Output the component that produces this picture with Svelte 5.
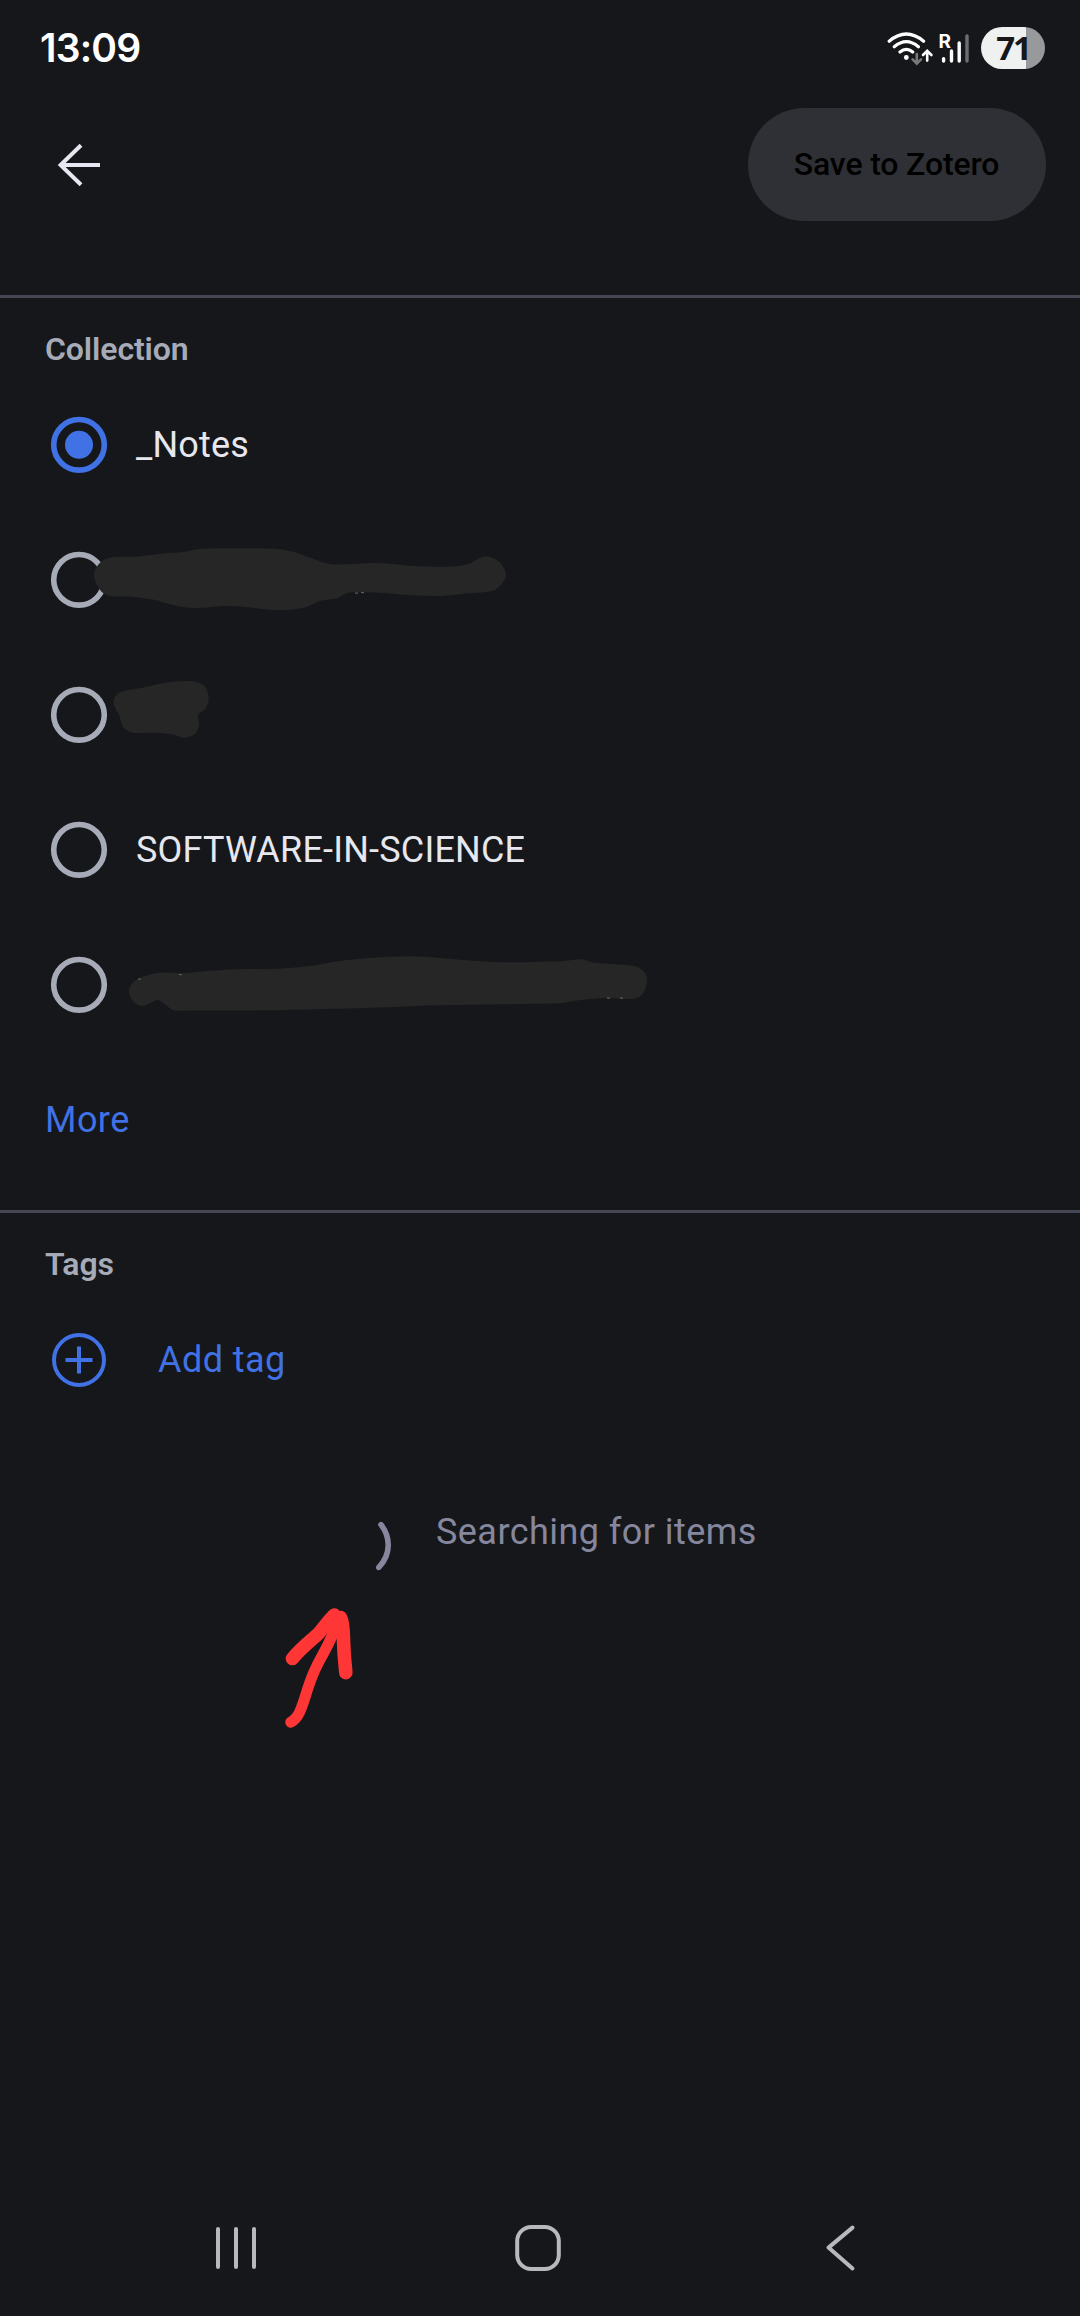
<script lang="ts">
  type Point = [number, number];

  type Collection = {
    id: number;
    name?: string;
    mask?: Point[];
    specks?: Point[];
  };

  const collections: Collection[] = [
    { id: 1, name: '_Notes' },
    {
      id: 2,
      mask: [
        [94, 63], [100, 50.7], [112, 45.3], [138, 44.5], [165, 41.3], [182, 40.3],
        [200, 37], [238, 36.3], [275, 36.8], [293, 39.7], [310, 45.7], [332, 52.3],
        [379, 51], [413, 54], [448, 54.7], [468, 52.3], [485, 44.3], [499, 49.7],
        [506, 63], [499, 75], [489, 79.7], [468, 81.3], [441, 84], [413, 83.3],
        [379, 80.7], [348, 80.7], [337, 86.3], [320, 89], [303, 96], [275, 98],
        [231, 94], [193, 96], [169, 92], [155, 88], [131, 84.7], [110, 84], [100, 78],
      ],
      specks: [[355, 80.5], [361, 80]],
    },
    {
      id: 3,
      mask: [
        [113.6, 56.3], [117, 47.3], [124, 44], [144.6, 40.3], [165, 35.7], [193, 34.3],
        [205, 39.7], [208.7, 52.3], [205, 62.3], [198, 68], [199, 78], [194.5, 87.3],
        [184, 90.7], [172, 87.3], [155, 85.7], [132.6, 85.7], [123, 79.7], [119.5, 69],
      ],
    },
    { id: 4, name: 'SOFTWARE-IN-SCIENCE' },
    {
      id: 5,
      mask: [
        [129, 73.7], [133.5, 64.7], [145, 59], [160.5, 55.7], [182, 56.3], [208, 54],
        [243, 52], [273, 52], [312, 48.7], [338, 44.3], [368.6, 41], [412, 39.3],
        [438, 40.7], [472.7, 43.7], [511.7, 45.3], [563.7, 44], [581, 42.3], [594, 45.7],
        [633, 48.7], [644, 54.7], [647, 64.7], [642, 78], [631, 82], [607, 81],
        [581, 83], [559, 86.3], [520, 87], [433.7, 88.3], [390, 90.3], [269, 93.3],
        [190, 93.6], [173.5, 93.3], [165, 87.3], [158, 83], [152, 85.3], [143, 89],
        [133.5, 84.7],
      ],
      specks: [[138, 61.5], [179, 57], [607, 80.5], [620, 80.5]],
    },
  ];

  let selected = $state(1);

  // closed smooth curve through all points
  function blob(points: Point[]) {
    const n = points.length;
    const at = (i: number) => points[(i + n) % n];
    let d = `M${points[0].join(' ')}`;
    for (let i = 0; i < n; i++) {
      const [a, b, c, e] = [at(i - 1), at(i), at(i + 1), at(i + 2)];
      // keep handles short where a long segment meets a short one
      const max = Math.hypot(c[0] - b[0], c[1] - b[1]) / 3;
      const handle = (from: Point, to: Point) => {
        const dx = to[0] - from[0];
        const dy = to[1] - from[1];
        const k = Math.min(1 / 6, max / Math.hypot(dx, dy));
        return [dx * k, dy * k];
      };
      const h1 = handle(a, c);
      const h2 = handle(b, e);
      d += `C${b[0] + h1[0]} ${b[1] + h1[1]} ${c[0] - h2[0]} ${c[1] - h2[1]} ${c[0]} ${c[1]}`;
    }
    return d + 'Z';
  }
</script>

<div class="screen">
  <div class="status">
    <span class="time">13:09</span>
    <svg class="signals" width="90" height="42" viewBox="884 27 90 42" fill="none" stroke="#fff" stroke-linecap="round">
      <path d="M889.2 41.2Q906.3 26.8 923.6 41.2M894.3 46.8Q906.3 36.6 918.4 46.8M900 52Q906.3 46.6 912.7 52" stroke-width="3.2" />
      <circle cx="906.3" cy="57.5" r="2.4" fill="#fff" stroke="none" />
      <path d="M916.8 54V63M912.6 59.4L916.8 63.6L921 59.4" stroke="#78797b" stroke-width="2.6" />
      <path d="M927.2 60.6V51.5M923 55L927.2 50.8L931.4 55" stroke-width="2.6" />
      <text class="roaming" x="938.5" y="47.5">R</text>
      <path d="M943.6 58.6V61M951.5 51V61M959.2 43V61" stroke-width="3.4" />
      <path d="M967 36V61" stroke="#6d6e71" stroke-width="3.4" />
    </svg>
    <span class="battery">71</span>
  </div>

  <header class="toolbar">
    <button type="button" class="icon-btn" aria-label="Back">
      <svg width="44" height="44" viewBox="0 0 44 44" fill="none" stroke="#e6e7f0" stroke-width="4">
        <path d="M43 22H4M24 2.2L3.6 22L24 41.8" />
      </svg>
    </button>
    <button type="button" class="save" disabled>Save to Zotero</button>
  </header>

  <section>
    <h2>Collection</h2>
    {#each collections as item (item.id)}
      <button type="button" class="row" onclick={() => (selected = item.id)}>
        <svg class="radio" class:on={selected === item.id} width="58" height="58" viewBox="0 0 58 58">
          <circle class="ring" cx="29" cy="28.8" r="25.3" />
          {#if selected === item.id}
            <circle class="dot" cx="29" cy="28.8" r="14" />
          {/if}
        </svg>
        {#if item.name}
          <span class="name">{item.name}</span>
        {/if}
        {#if item.mask}
          <svg class="mask" width="1080" height="135" viewBox="0 0 1080 135">
            <path d={blob(item.mask)} />
            {#each item.specks ?? [] as [x, y]}
              <rect {x} {y} width="3" height="1.2" />
            {/each}
          </svg>
        {/if}
      </button>
    {/each}
    <button type="button" class="row link more">More</button>
  </section>

  <section class="tags">
    <h2>Tags</h2>
    <button type="button" class="row link">
      <svg width="58" height="58" viewBox="0 0 58 58" fill="none" stroke="#4072e5" stroke-width="4">
        <circle cx="29" cy="29" r="25" />
        <path d="M29 15.5V42.5M15.5 29H42.5" />
      </svg>
      <span class="add">Add tag</span>
    </button>
  </section>

  <div class="progress">
    <svg width="20" height="54" viewBox="374 1519 20 54" fill="none" stroke="#86879e" stroke-width="5.6" stroke-linecap="round">
      <path d="M381 1524.6C390.5 1537 391.5 1554 378.8 1567.4" />
    </svg>
    <span>Searching for items</span>
  </div>

  <svg class="pointer" width="80" height="130" viewBox="280 1600 80 130" fill="none" stroke="#ff3636" stroke-linecap="round" stroke-linejoin="round">
    <path d="M290.8 1722.2C303 1716 304 1694 314 1672C321 1655 331 1644 337 1622" stroke-width="11" />
    <path d="M292.4 1658.6C303 1646 312 1640 319 1633C325 1626 329 1620 334.4 1615" stroke-width="13.4" />
    <path d="M340.6 1617.6C344 1624 343 1634 343.8 1646C344 1656 345.2 1664 345.8 1672.6" stroke-width="13.6" />
  </svg>

  <nav>
    <svg width="44" height="50" viewBox="0 0 44 50"><path d="M4 6V44M22 6V44M40 6V44" /></svg>
    <svg class="home" width="50" height="50" viewBox="0 0 50 50"><rect x="4.2" y="4" width="41.6" height="42" rx="14" /></svg>
    <svg width="32" height="50" viewBox="0 0 32 50"><path d="M28.5 4.6L4.5 24.6L28.5 45.4" /></svg>
  </nav>
</div>

<style>
  :global(body) {
    margin: 0;
    background: #15171a;
  }

  .screen {
    position: relative;
    display: flex;
    flex-direction: column;
    width: 1080px;
    height: 2316px;
    background: #15171a;
    color: #e7e7ef;
    font-family: Roboto, sans-serif;
    font-size: 36px;
    letter-spacing: 0.45px;
    overflow: hidden;
  }

  button {
    background: none;
    border: 0;
    padding: 0;
    margin: 0;
    color: inherit;
    font: inherit;
    letter-spacing: inherit;
  }

  .status {
    display: flex;
    align-items: center;
    height: 96px;
    box-sizing: border-box;
    padding: 0 35px 0 40px;
  }

  .time {
    flex: 1;
    padding-bottom: 2px;
    font-family: Inter, sans-serif;
    font-size: 39px;
    font-weight: 600;
    letter-spacing: -0.8px;
    color: #fff;
  }

  .signals {
    margin-right: 7px;
  }

  .roaming {
    font-family: Inter, sans-serif;
    font-size: 19px;
    font-weight: 700;
    letter-spacing: 0;
    fill: #fff;
    stroke: none;
  }

  .battery {
    width: 64px;
    height: 42px;
    border-radius: 21px;
    background: linear-gradient(90deg, #eff0f0 45px, #98999b 45px);
    color: #15171a;
    font-family: "Open Sans", sans-serif;
    font-size: 33px;
    font-weight: 700;
    line-height: 42px;
    letter-spacing: -2px;
    text-align: center;
  }

  .toolbar {
    display: flex;
    align-items: flex-start;
    justify-content: space-between;
    height: 199px;
    box-sizing: border-box;
    padding: 12px 34px 0 57px;
  }

  .icon-btn {
    display: flex;
    align-items: center;
    height: 114px;
  }

  .save {
    width: 298px;
    height: 113px;
    padding: 0 1px 2px 0;
    border-radius: 57px;
    background: #2f3035;
    color: #000;
    font-size: 32px;
    font-weight: 500;
    letter-spacing: -0.15px;
  }

  section {
    border-top: 3px solid #444753;
    height: 912px;
  }

  section.tags {
    height: 214px;
  }

  h2 {
    margin: 0;
    padding: 32px 45px 0;
    height: 47px;
    line-height: 38px;
    font-size: 32px;
    font-weight: 600;
    letter-spacing: -0.1px;
    color: #a7abb8;
  }

  .row {
    position: relative;
    display: flex;
    align-items: center;
    width: 100%;
    height: 135px;
    padding-left: 50px;
    text-align: left;
  }

  .radio .ring {
    fill: none;
    stroke: #a7abb8;
    stroke-width: 5.6;
  }

  .radio.on .ring {
    stroke: #4072e5;
  }

  .radio .dot {
    fill: #4072e5;
  }

  .name {
    margin-left: 28px;
    letter-spacing: 0.2px;
  }

  .mask {
    position: absolute;
    left: 0;
    top: 0;
    fill: #262626;
  }

  .mask rect {
    fill: #5c5d5f;
  }

  .link {
    color: #4072e5;
  }

  .more {
    padding-left: 45px;
  }

  .add {
    margin-left: 50px;
  }

  .progress {
    display: flex;
    align-items: flex-start;
    padding: 92px 0 0 374px;
    color: #86879e;
  }

  .progress span {
    margin: -8px 0 0 42px;
    line-height: 42px;
  }

  .pointer {
    position: absolute;
    left: 280px;
    top: 1600px;
  }

  nav {
    display: flex;
    align-items: center;
    justify-content: space-between;
    margin-top: auto;
    height: 136px;
    padding: 0 224px 0 214px;
  }

  nav svg {
    fill: none;
    stroke: #b8b9bb;
    stroke-width: 4;
    stroke-linecap: round;
    stroke-linejoin: round;
  }

  nav .home {
    margin-right: 7px;
  }
</style>
